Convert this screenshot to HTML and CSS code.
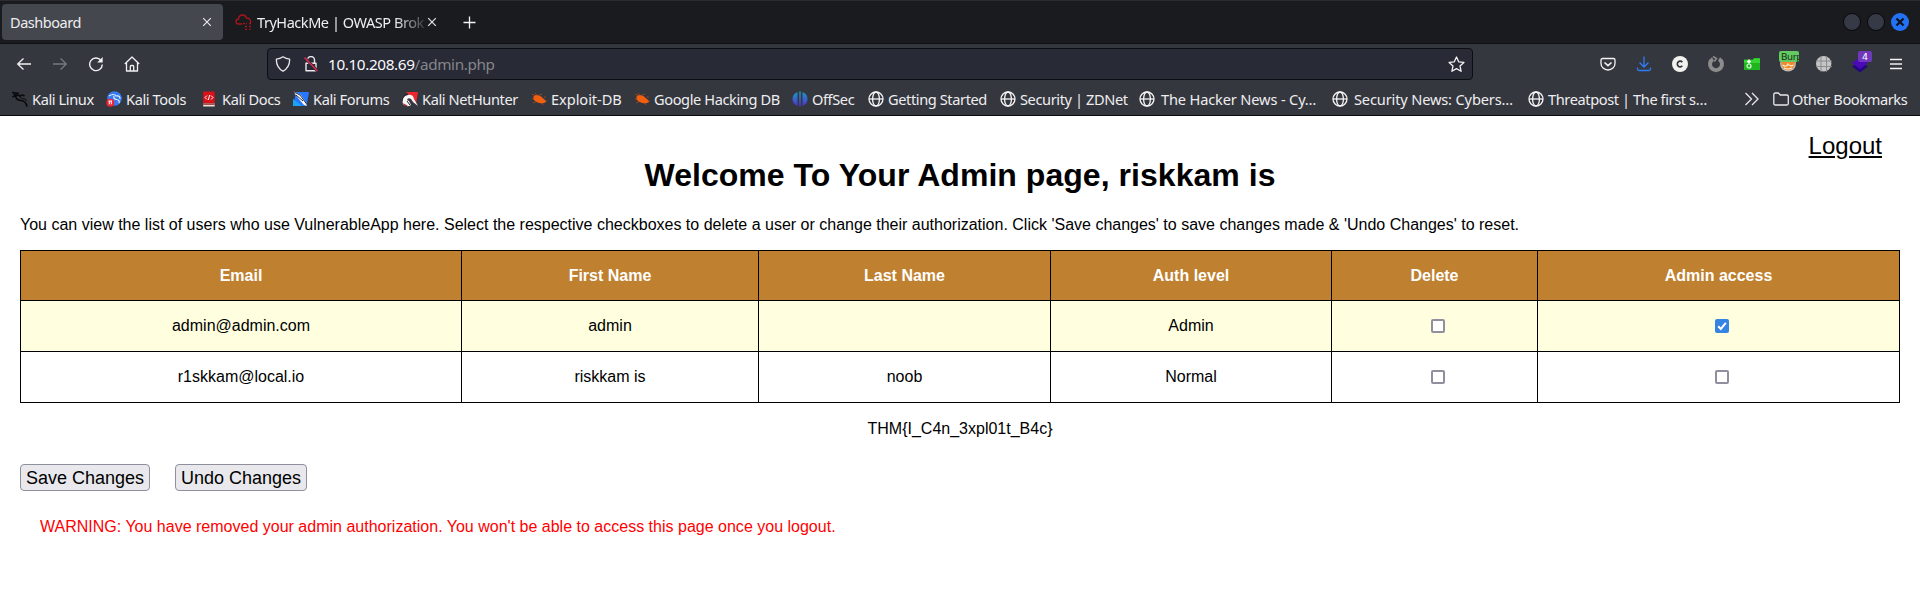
FILE: index.html
```html
<!DOCTYPE html>
<html lang="en">
<head>
<meta charset="utf-8">
<title>Dashboard</title>
<link rel="stylesheet" href="styles.css">
</head>
<body>
<svg class="defs" width="0" height="0">
  <defs>
    <symbol id="globe" viewBox="0 0 16 16"><g fill="none" stroke="#f4f4f6" stroke-width="1.3"><circle cx="8" cy="8" r="7"/><ellipse cx="8" cy="8" rx="3.4" ry="7"/><path d="M1 8h14"/></g></symbol>
    <symbol id="bug" viewBox="0 0 16 16"><path d="M1 3l4 2M4 2l3 3M1 8h4M2 12l5-2M8 4l3-1M11 12l1 2M13 6h2M14 10h2" stroke="#a8481c" stroke-width=".8"/><path d="M2.500 5.500C4 3.500 8 4 10 5.500L14 9l1 2-2 1C9 13 4 11 2.500 8z" fill="#f2600f"/></symbol>
    <symbol id="close" viewBox="0 0 10 10"><path d="M1.200 1.200l7.600 7.600M8.800 1.200l-7.600 7.600" stroke="#e6e6e9" stroke-width="1.200"/></symbol>
  </defs>
</svg>
<header class="browser">
  <div class="tabs">
    <div class="tab active"><span class="tab-title">Dashboard</span><svg class="x" width="10" height="10"><use href="#close"/></svg></div>
    <div class="tab">
      <svg class="fav" width="17" height="17" viewBox="0 0 17 17" fill="none" stroke="#a9151b" stroke-width="1.300"><path d="M7 10H3.500a2.500 2.500 0 0 1 0-5Q4 1 7.500 1q3 0 4 3Q15 4 15.500 7v2"/><path d="M8 9.700h4m2 0h2M10 12.500h2m2 0h2M10 15.300h2m2 0h1.500" stroke-dasharray="2 1"/></svg>
      <span class="tab-title fade">TryHackMe | OWASP Brok</span><svg class="x" width="10" height="10"><use href="#close"/></svg>
    </div>
    <svg class="plus" width="13" height="13" viewBox="0 0 13 13"><path d="M6.500 .5v12M.5 6.500h12" stroke="#f3f3f5" stroke-width="1.300"/></svg>
    <div class="win"><i></i><i></i><b><svg width="10" height="10" viewBox="0 0 10 10"><path d="M1.500 1.500l7 7M8.500 1.500l-7 7" stroke="#10131a" stroke-width="2.200"/></svg></b></div>
  </div>
  <div class="nav">
    <div class="navbtns">
      <svg width="16" height="16" viewBox="0 0 16 16" fill="none" stroke="#f1f1f3" stroke-width="1.300"><path d="M15 8H1.500M7.500 2.500L1.700 8l5.800 5.500"/></svg>
      <svg width="16" height="16" viewBox="0 0 16 16" fill="none" stroke="#77797f" stroke-width="1.300"><path d="M1 8h13.500M8.500 2.500L14.300 8l-5.800 5.500"/></svg>
      <svg width="16" height="16" viewBox="0 0 16 16" fill="none" stroke="#f1f1f3" stroke-width="1.400"><path d="M13 4.500A6.300 6.300 0 1 0 14.300 8.500"/><path d="M14.700 1v5.500H9.200z" fill="#f1f1f3" stroke="none"/></svg>
      <svg width="16" height="16" viewBox="0 0 16 16" fill="none" stroke="#f1f1f3" stroke-width="1.300" stroke-linejoin="round"><path d="M.8 8L8 1l7.200 7M2.500 6.800V15h11V6.800M6.300 15v-4.500q0-1 1-1h1.400q1 0 1 1V15"/></svg>
    </div>
    <div class="url">
      <svg width="16" height="16" viewBox="0 0 16 16" fill="none" stroke="#e9e9ec" stroke-width="1.300" stroke-linejoin="round"><path d="M8 .8q3 2 6.600 2.300Q15 11 8 15.300 1 11 1.400 3.100 5 2.800 8 .8z"/></svg>
      <svg class="lock" width="16" height="16" viewBox="0 0 16 16" fill="none" stroke="#e9e9ec" stroke-width="1.400"><path d="M4.500 7V4a3.500 3.500 0 0 1 7 0v3M3 7.200h10v7.600H3z" stroke-linejoin="round"/><path d="M1.500 1.500l13 13.500" stroke="#282a35" stroke-width="3"/><path d="M1.500 1.500l13 13.500" stroke="#e22850" stroke-width="1.500"/></svg>
      <span class="address">10.10.208.69<em>/admin.php</em></span>
      <svg class="star" width="17" height="17" viewBox="0 0 17 17" fill="none" stroke="#f1f1f3" stroke-width="1.300" stroke-linejoin="round"><path d="M8.500 1l2.200 4.800 5.200.6-3.900 3.500 1.100 5.400-4.600-2.700-4.600 2.700L5 9.900 1.100 6.400l5.200-.6z"/></svg>
    </div>
    <div class="tools">
      <svg viewBox="0 0 18 18" fill="none" stroke="#f1f1f3" stroke-width="1.300"><path d="M3.500 3.500h11q1.500 0 1.500 1.500v3.500a7 6.500 0 0 1-14 0V5q0-1.500 1.500-1.500z"/><path d="M5.500 7.500L9 10.700l3.500-3.200" stroke-width="1.600"/></svg>
      <svg viewBox="0 0 18 18" fill="none" stroke="#2f7cf6" stroke-width="1.300"><path d="M9 1.500v10.300M4.500 7.500L9 12l4.500-4.500M2.500 12.500V14q0 1.500 1.500 1.500h10q1.500 0 1.500-1.500v-1.500"/></svg>
      <svg viewBox="0 0 18 18"><circle cx="9" cy="9" r="8" fill="#f1f1ee"/><path d="M11.300 7.200A2.800 2.800 0 1 0 11.300 10.800" fill="none" stroke="#34363d" stroke-width="1.700"/></svg>
      <svg viewBox="0 0 18 18" fill="none"><path d="M6 4A6 6 0 1 0 12 4" stroke="#8c8c8c" stroke-width="4"/><path d="M6 1.500l3.500 2-2.200 3" stroke="#8c8c8c" stroke-width="1.500"/></svg>
      <svg viewBox="0 0 18 18"><path d="M1 4.500h9l1-1.500h6v12H1z" fill="#20b51f"/><path d="M1 5h9l1-1.500h6V8H1z" fill="#35d634"/><path d="M6 4.500v4M4 6.500h4" stroke="#fff" stroke-width="1.600"/><circle cx="6" cy="11" r="2" fill="none" stroke="#e1fbe0" stroke-width="1.200"/></svg>
      <div class="ext burp"><svg viewBox="0 0 18 18"><circle cx="9" cy="8.500" r="8" fill="#b9bbb9"/><circle cx="9" cy="8.500" r="6.700" fill="#f28a2d"/><path d="M3.500 10q4 3 5.500-1 2 3 5.500 1M5 13q4 2 8 0" stroke="#fff2d8" stroke-width="1.200" fill="none"/></svg><span>Burp</span></div>
      <svg viewBox="0 0 18 18" fill="none"><circle cx="8.700" cy="8.700" r="7.700" fill="#c4c4c4"/><path d="M1 6h16M1 11.500h16M6 1v16M11.500 1v16" stroke="#85878b" stroke-width=".9"/></svg>
      <div class="ext count"><svg viewBox="0 0 18 18"><path d="M1 11.500l8-4.500 8 4.500-8 6z" fill="#22077f"/><path d="M1 8l8-6 8 6-8 6z" fill="#4b0ab8"/></svg><span>4</span></div>
      <svg viewBox="0 0 18 18"><path d="M3 4.500h12M3 9h12M3 13.500h12" stroke="#f1f1f3" stroke-width="1.300"/></svg>
    </div>
  </div>
  <nav class="bookmarks">
    <a><svg viewBox="0 0 16 16" fill="none" stroke="#08090b"><path d="M0 1.500l7 1M.5 6q4-3 8-1 1-2 4 0M4 4Q3 9 9 9.500q5 .5 6 6" stroke-width="1.600"/><path d="M8 5q0 3 5 3l2 2M1 3l5 1" stroke-width="1"/></svg><span>Kali Linux</span></a>
    <a><svg viewBox="0 0 16 16"><circle cx="8.500" cy="7.500" r="7.300" fill="#367bf0"/><path d="M3 5q5-3 7 0 4-1 4 3M8 5q-1 3 2.500 3.500T13 12" fill="none" stroke="#e8f1ff" stroke-width="1.200"/><circle cx="4.300" cy="11.700" r="4" fill="#ed2339"/><path d="M2.500 10h3.600M3.300 10v3.300m2-3.300v3.300" stroke="#fff"/></svg><span>Kali Tools</span></a>
    <a><svg viewBox="0 0 16 16"><path d="M1.200.5h11.500v12H1.200z" fill="#d81219"/><path d="M1.200 12.500h11.500v3H1.200z" fill="#eadfd9"/><path d="M1.200 12.700h11.500v1H1.200z" fill="#861015"/><path d="M5 4.500L3 6.500l2 2M9 4.500l2 2-2 2M7.700 4L6.300 9" fill="none" stroke="#fff"/></svg><span>Kali Docs</span></a>
    <a><svg viewBox="0 0 16 16"><path d="M3 1h13l-2.500 14H0z" fill="#2777ff"/><path d="M0 8l9 7H0z" fill="#1ba4f4"/><path d="M0 0l8 4 7 11-4-1-6-7z" fill="#fff"/><path d="M0 .5l7 3.500 8 11M3 4l7 6" fill="none" stroke="#151820" stroke-width=".9"/></svg><span>Kali Forums</span></a>
    <a><svg viewBox="0 0 16 16"><path d="M4 1h12l-2 12z" fill="#eb2630"/><path d="M1 13q-2-8 5-9 5-1 6 4l4 7-5-4-2-3q-3-2-4 1l2 1 2 4q-4 3-8-1z" fill="#f7f5f5"/><path d="M0 10q1-6 6-7M5 10l3 4" fill="none" stroke="#20202a"/><path d="M1 12l2 3h3z" fill="#c91f2a"/></svg><span>Kali NetHunter</span></a>
    <a class="loose"><svg><use href="#bug"/></svg><span>Exploit-DB</span></a>
    <a><svg><use href="#bug"/></svg><span>Google Hacking DB</span></a>
    <a><svg viewBox="0 0 16 16"><defs><linearGradient id="og" x2="0" y2="1"><stop stop-color="#1c9bc4"/><stop offset="1" stop-color="#512fd0"/></linearGradient></defs><path d="M5.500 1v14Q.5 13 .5 8t5-7zM10.500 1v14q5-2 5-7t-5-7zM7.200.5h1.600v15H7.200z" fill="url(#og)"/></svg><span>OffSec</span></a>
    <a><svg><use href="#globe"/></svg><span>Getting Started</span></a>
    <a><svg><use href="#globe"/></svg><span>Security | ZDNet</span></a>
    <a class="wide"><svg><use href="#globe"/></svg><span>The Hacker News - Cy…</span></a>
    <a class="wide"><svg><use href="#globe"/></svg><span>Security News: Cybers…</span></a>
    <a><svg><use href="#globe"/></svg><span>Threatpost | The first s…</span></a>
    <a class="more"><svg viewBox="0 0 16 16" fill="none" stroke="#e8e8ea" stroke-width="1.300"><path d="M1.500 2l6 6-6 6M8 2l6 6-6 6"/></svg></a>
    <a><svg viewBox="0 0 16 16" fill="none" stroke="#e8e8ea" stroke-width="1.300"><path d="M.8 3.500q0-1.500 1.500-1.500h3l2 2h6.500q1.500 0 1.500 1.500v7q0 1.500-1.500 1.500H2.300Q.8 14 .8 12.500z"/></svg><span>Other Bookmarks</span></a>
  </nav>
</header>
<main class="page">
  <a class="logout">Logout</a>
  <h1>Welcome To Your Admin page, riskkam is</h1>
  <p class="intro">You can view the list of users who use VulnerableApp here. Select the respective checkboxes to delete a user or change their authorization. Click 'Save changes' to save changes made &amp; 'Undo Changes' to reset.</p>
  <table>
    <colgroup><col class="c-email"><col class="c-first"><col class="c-last"><col class="c-auth"><col class="c-delete"><col class="c-access"></colgroup>
    <thead><tr><th>Email</th><th>First Name</th><th>Last Name</th><th>Auth level</th><th>Delete</th><th>Admin access</th></tr></thead>
    <tbody>
      <tr class="alt"><td>admin@admin.com</td><td>admin</td><td></td><td>Admin</td><td><span class="check"></span></td><td><span class="check on"><svg width="14" height="14" viewBox="0 0 14 14"><path d="M3.200 7.300l2.600 2.600 5-6" fill="none" stroke="#fff" stroke-width="2"/></svg></span></td></tr>
      <tr><td>r1skkam@local.io</td><td>riskkam is</td><td>noob</td><td>Normal</td><td><span class="check"></span></td><td><span class="check"></span></td></tr>
    </tbody>
  </table>
  <p class="flag">THM{I_C4n_3xpl01t_B4c}</p>
  <div class="actions"><button class="save">Save Changes</button><button class="undo">Undo Changes</button></div>
  <p class="warning">WARNING: You have removed your admin authorization. You won't be able to access this page once you logout.</p>
</main>
</body>
</html>
```
FILE: styles.css
```css
* { box-sizing: border-box; }
body { margin: 0; background: #fff; color: #000; font: 16px/18px "Liberation Sans", Arial, sans-serif; overflow: hidden; }
.defs { position: absolute; }
.browser { height: 116px; background: #35373f; border-bottom: 1px solid #0c0c10; color: #eeeef0; font: 14.67px/20px "Noto Sans", sans-serif; }
.browser svg { display: block; flex: none; }

.tabs { height: 44px; display: flex; align-items: center; padding: 0 11px 0 2px; background: #1a1b1f; border-top: 1px solid #2b2c32; border-bottom: 1px solid #0e0f12; font-size: 14.5px; letter-spacing: -.45px; }
.tab { height: 36px; display: flex; align-items: center; width: 216px; padding: 0 2px 0 12px; }
.tab.active { width: 221px; padding: 0 11px 0 8px; background: #45474e; border-radius: 4px; }
.tab-title { flex: 1; white-space: nowrap; }
.fav { margin-right: 5px; }
.fade { mask-image: linear-gradient(90deg, #000 82%, rgba(0, 0, 0, .15)); }
.tab .x { margin-left: 2px; }
.plus { margin-left: 24px; }
.win { display: flex; gap: 6px; margin-left: auto; }
.win i, .win b { width: 18px; height: 18px; border-radius: 50%; background: #363a46; border: 1px solid #08090b; }
.win b { display: grid; place-items: center; background: #2371f5; border: 0; }

.nav { height: 40px; display: flex; align-items: center; padding-left: 16px; }
.navbtns { display: flex; gap: 20px; width: 251px; }
.url { width: 1206px; height: 32px; display: flex; align-items: center; padding: 0 7px; background: #282a35; border: 1px solid #0d0e13; border-radius: 4px; }
.lock { margin-left: 12px; }
.address { margin-left: 9px; flex: 1; font-size: 15.3px; letter-spacing: -.37px; color: #fbfbfe; }
.address em { font-style: normal; color: #85868c; }
.tools { display: flex; gap: 18px; margin-left: 126px; }
.tools svg { width: 18px; height: 18px; }
.ext { position: relative; width: 18px; height: 18px; }
.ext span { position: absolute; border-radius: 2px; }
.burp span { left: 0; top: -4px; width: 20px; height: 11px; padding-left: 2px; background: #63cb61; color: #153016; font: 9.500px/11px "DejaVu Sans", sans-serif; letter-spacing: -.4px; overflow: hidden; }
.count span { left: 7px; top: -4px; width: 14px; height: 11px; background: #7038bd; color: #fff; font: 9.500px/11px "DejaVu Sans", sans-serif; text-align: center; }

.bookmarks { height: 31px; display: grid; grid-template-columns: 94px 96px 91px 109px 129px 103px 158px 76px 132px 139px 193px 196px 216px 29px 136px; padding: 0 0 1px 12px; font-size: 14.6px; letter-spacing: -.4px; }
.bookmarks a { display: flex; align-items: center; gap: 4px; white-space: nowrap; }
.bookmarks a.wide { gap: 6px; letter-spacing: -.15px; }
.bookmarks a.loose { letter-spacing: -.05px; }
.bookmarks a:last-child { gap: 3px; }
.bookmarks svg { width: 16px; height: 16px; }

.page { display: flex; flex-direction: column; padding: 16px 20px 0; }
.logout { align-self: flex-end; margin-right: 18px; font-size: 24px; line-height: 27px; text-decoration: underline; }
h1 { margin: -2px 0 0; font-size: 32px; line-height: 37px; letter-spacing: .04px; text-align: center; }
p { margin: 0; }
.intro { margin-top: 22px; line-height: 18px; white-space: nowrap; }
table { margin-top: 16px; width: 1879px; table-layout: fixed; border-collapse: collapse; }
.c-email { width: 441px; }
.c-first { width: 297px; }
.c-last { width: 292px; }
.c-auth { width: 281px; }
.c-delete { width: 206px; }
.c-access { width: 362px; }
th, td { height: 51px; padding: 0; border: 1px solid #000; text-align: center; }
th { height: 50px; background: #bf802f; color: #fff; }
.alt td { background: #ffffe0; }
.check { display: inline-block; width: 14px; height: 14px; margin: -2px 0 0 7px; vertical-align: middle; border: 2px solid #8f8f9d; border-radius: 2px; background: #fff; }
.check.on { border: 0; background: #3584e4; }
.check svg { display: block; }
.flag { margin-top: 17px; text-align: center; }
.actions { display: flex; gap: 25px; margin-top: 26px; }
button { height: 27px; padding: 1px 0 0; border: 1px solid #8f8f9d; border-radius: 4px; background: #e9e9ed; color: #000; font: 18px/24px "Liberation Sans", Arial, sans-serif; }
.save { width: 130px; }
.undo { width: 132px; }
.warning { margin: 27px 0 0 20px; color: #f00; letter-spacing: .006px; }
```
